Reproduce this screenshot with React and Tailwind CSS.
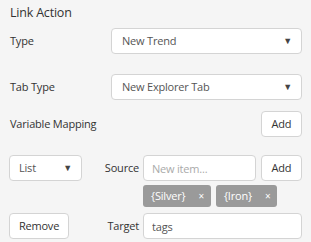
import { useState } from 'react'

const font = { fontFamily: '"Open Sans", "Noto Sans", sans-serif' }

const Select = ({ value, className = '' }) => (
  <div className={`flex items-center justify-between h-[26px] bg-white border border-[#d4d4d4] rounded-[4px] ${className}`}>
    <span className="text-[11px] text-[#555]">{value}</span>
    <span className="text-[9px] text-[#444]">▼</span>
  </div>
)

const Button = ({ children, className = '' }) => (
  <button className={`shrink-0 h-[26px] bg-white border border-[#d4d4d4] rounded-[4px] text-[11px] text-[#333] ${className}`}>
    {children}
  </button>
)

const Tag = ({ label }) => (
  <span className="flex items-center h-[22px] pl-[8px] pr-[7px] gap-[13px] bg-[#9a9a9a] rounded-[3px] text-[11px] text-white">
    {label}
    <span className="text-[10px]">×</span>
  </span>
)

export default function App() {
  const [tags] = useState(['{Silver}', '{Iron}'])

  return (
    <div className="w-[311px] h-[242px] bg-[#f5f5f5] pl-[10px] pr-[9px] pt-[4px] text-[#333] tracking-[-0.2px]" style={font}>
      <h2 className="text-[12.5px] leading-[18px]">Link Action</h2>

      <div className="flex items-center mt-[6px]">
        <span className="w-[101px] shrink-0 text-[11px]">Type</span>
        <Select value="New Trend" className="flex-1 pl-[10px] pr-[9px]" />
      </div>

      <div className="flex items-center mt-[20px]">
        <span className="w-[101px] shrink-0 text-[11px]">Tab Type</span>
        <Select value="New Explorer Tab" className="flex-1 pl-[10px] pr-[9px]" />
      </div>

      <div className="flex items-center justify-between mt-[11px]">
        <span className="text-[11px]">Variable Mapping</span>
        <Button className="w-[41px]">Add</Button>
      </div>

      <div className="flex mt-[18px] -ml-[1px]">
        <div className="w-[73px] shrink-0 flex flex-col justify-between">
          <Select value="List" className="pl-[9px] pr-[9px]" />
          <Button className="w-[60px]">Remove</Button>
        </div>

        <div className="flex-1 min-w-0 flex flex-col">
          <div className="flex items-center">
            <span className="w-[61px] shrink-0 pr-[4px] text-right text-[11px]">Source</span>
            <input
              placeholder="New item..."
              className="w-[113px] min-w-0 shrink-0 h-[26px] px-[8px] bg-white border border-[#d4d4d4] rounded-[4px] text-[11px] placeholder:text-[#aaa] outline-none"
            />
            <Button className="w-[41px] ml-[5px]">Add</Button>
          </div>
          <div className="flex gap-[5px] ml-[61px] mt-[4px]">
            {tags.map(t => <Tag key={t} label={t} />)}
          </div>
          <div className="flex items-center mt-[6px]">
            <span className="w-[61px] shrink-0 pr-[4px] text-right text-[11px]">Target</span>
            <input
              defaultValue="tags"
              className="flex-1 min-w-0 h-[26px] px-[8px] bg-white border border-[#d4d4d4] rounded-[4px] text-[11px] text-[#555] outline-none"
            />
          </div>
        </div>
      </div>
    </div>
  )
}
